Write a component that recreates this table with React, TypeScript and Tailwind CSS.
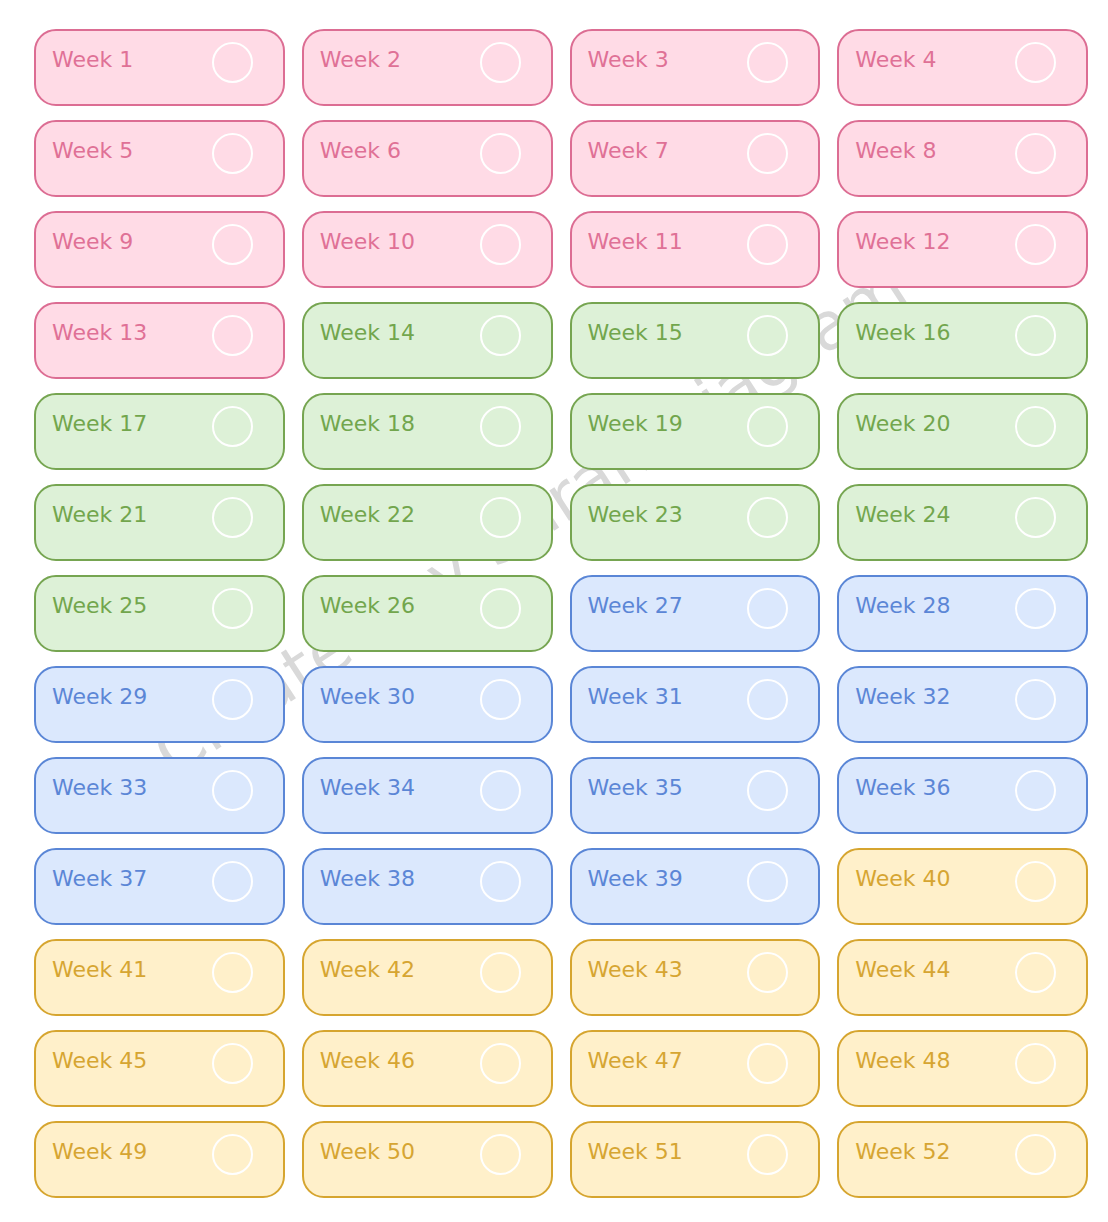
const themes = {
  pink: 'border-[#dc6d93] bg-[#ffdbe6] text-[#df7196]',
  green: 'border-[#76a551] bg-[#ddf1d7] text-[#72a64d]',
  blue: 'border-[#5a86d6] bg-[#dbe8fd] text-[#5b86d6]',
  yellow: 'border-[#d6a52f] bg-[#fff0ca] text-[#d6a532]',
};

function themeFor(week: number) {
  if (week <= 13) return themes.pink;
  if (week <= 26) return themes.green;
  if (week <= 39) return themes.blue;
  return themes.yellow;
}

function WeekCard({ week }: { week: number }) {
  return (
    <div
      className={`flex h-[77px] items-start justify-between rounded-[22px] border-2 pl-[16px] pr-[30px] ${themeFor(week)}`}
    >
      <span className="mt-[16px] text-[22px] leading-[26px]">
        Week {week}
      </span>
      <span className="mt-[10.5px] h-[41px] w-[41px] rounded-full border-2 border-white" />
    </div>
  );
}

export default function App() {
  const weeks = Array.from({ length: 52 }, (_, i) => i + 1);

  return (
    <div
      className="relative h-[1222px] w-[1108px] overflow-hidden bg-white"
      style={{ fontFamily: '"DejaVu Sans", "Liberation Sans", sans-serif' }}
    >
      {/* watermark sits behind the grid */}
      <div className="pointer-events-none absolute left-[530px] top-[520px] -translate-x-1/2 -translate-y-1/2 rotate-[-33deg] whitespace-nowrap text-[66px] leading-none text-[#d9d9d9]">
        Created by Sarah Diagram
      </div>
      <div className="relative grid grid-cols-4 gap-x-[17px] gap-y-[14px] pl-[34px] pr-[20px] pt-[29px]">
        {weeks.map((week) => (
          <WeekCard key={week} week={week} />
        ))}
      </div>
    </div>
  );
}
